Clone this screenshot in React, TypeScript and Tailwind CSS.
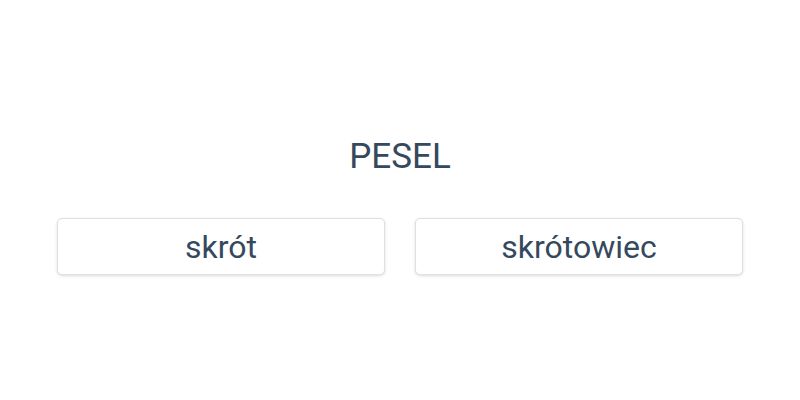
export default function App() {
  const options = ["skrót", "skrótowiec"];

  return (
    <div className="flex h-[400px] w-[800px] flex-col items-center bg-white pt-[134px] font-['Roboto',sans-serif] text-[#35495e]">
      <h1 className="text-[35px] leading-[46px]">PESEL</h1>
      <div className="mt-[38px] flex gap-[30px]">
        {options.map((o) => (
          <button
            key={o}
            className="h-[57px] w-[328px] rounded-[5px] border border-[#e0e0e0] bg-white text-[32px] leading-none text-[#35495e] shadow-[0_1px_3px_rgba(0,0,0,0.14)]"
          >
            {o}
          </button>
        ))}
      </div>
    </div>
  );
}
